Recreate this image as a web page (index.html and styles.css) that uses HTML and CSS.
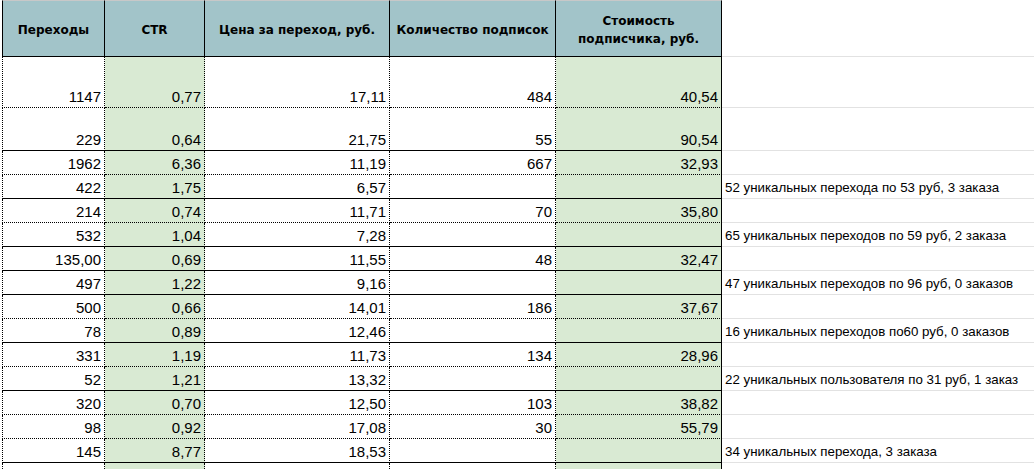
FILE: index.html
```html
<!DOCTYPE html>
<html lang="ru">
<head>
<meta charset="utf-8">
<title>Переходы</title>
<link rel="stylesheet" href="styles.css">
</head>
<body>
<div class="sheet">
  <div class="row head">
    <div class="c c1">Переходы</div>
    <div class="c c2">CTR</div>
    <div class="c c3">Цена за переход, руб.</div>
    <div class="c c4">Количество подписок</div>
    <div class="c c5">Стоимость<br>подписчика, руб.</div>
    <div class="c c6"></div>
  </div>
  <div class="row r51 dash">
    <div class="c c1">1147</div><div class="c c2">0,77</div><div class="c c3">17,11</div><div class="c c4">484</div><div class="c c5">40,54</div><div class="c c6"></div>
  </div>
  <div class="row r43 solid">
    <div class="c c1">229</div><div class="c c2">0,64</div><div class="c c3">21,75</div><div class="c c4">55</div><div class="c c5">90,54</div><div class="c c6"></div>
  </div>
  <div class="row dash">
    <div class="c c1">1962</div><div class="c c2">6,36</div><div class="c c3">11,19</div><div class="c c4">667</div><div class="c c5">32,93</div><div class="c c6"></div>
  </div>
  <div class="row solid">
    <div class="c c1">422</div><div class="c c2">1,75</div><div class="c c3">6,57</div><div class="c c4"></div><div class="c c5"></div><div class="c c6">52 уникальных перехода по 53 руб, 3 заказа</div>
  </div>
  <div class="row dash">
    <div class="c c1">214</div><div class="c c2">0,74</div><div class="c c3">11,71</div><div class="c c4">70</div><div class="c c5">35,80</div><div class="c c6"></div>
  </div>
  <div class="row solid">
    <div class="c c1">532</div><div class="c c2">1,04</div><div class="c c3">7,28</div><div class="c c4"></div><div class="c c5"></div><div class="c c6">65 уникальных переходов по 59 руб, 2 заказа</div>
  </div>
  <div class="row solid">
    <div class="c c1">135,00</div><div class="c c2">0,69</div><div class="c c3">11,55</div><div class="c c4">48</div><div class="c c5">32,47</div><div class="c c6"></div>
  </div>
  <div class="row solid">
    <div class="c c1">497</div><div class="c c2">1,22</div><div class="c c3">9,16</div><div class="c c4"></div><div class="c c5"></div><div class="c c6">47 уникальных переходов по 96 руб, 0 заказов</div>
  </div>
  <div class="row dash">
    <div class="c c1">500</div><div class="c c2">0,66</div><div class="c c3">14,01</div><div class="c c4">186</div><div class="c c5">37,67</div><div class="c c6"></div>
  </div>
  <div class="row solid">
    <div class="c c1">78</div><div class="c c2">0,89</div><div class="c c3">12,46</div><div class="c c4"></div><div class="c c5"></div><div class="c c6">16 уникальных переходов по60 руб, 0 заказов</div>
  </div>
  <div class="row dash">
    <div class="c c1">331</div><div class="c c2">1,19</div><div class="c c3">11,73</div><div class="c c4">134</div><div class="c c5">28,96</div><div class="c c6"></div>
  </div>
  <div class="row solid">
    <div class="c c1">52</div><div class="c c2">1,21</div><div class="c c3">13,32</div><div class="c c4"></div><div class="c c5"></div><div class="c c6">22 уникальных пользователя по 31 руб, 1 заказ</div>
  </div>
  <div class="row dash">
    <div class="c c1">320</div><div class="c c2">0,70</div><div class="c c3">12,50</div><div class="c c4">103</div><div class="c c5">38,82</div><div class="c c6"></div>
  </div>
  <div class="row dash">
    <div class="c c1">98</div><div class="c c2">0,92</div><div class="c c3">17,08</div><div class="c c4">30</div><div class="c c5">55,79</div><div class="c c6"></div>
  </div>
  <div class="row solid">
    <div class="c c1">145</div><div class="c c2">8,77</div><div class="c c3">18,53</div><div class="c c4"></div><div class="c c5"></div><div class="c c6">34 уникальных перехода, 3 заказа</div>
  </div>
  <div class="row dash">
    <div class="c c1">157</div><div class="c c2">0,86</div><div class="c c3">9,06</div><div class="c c4">176</div><div class="c c5">30,40</div><div class="c c6"></div>
  </div>
</div>
</body>
</html>
```

FILE: styles.css
```css
html, body {
  margin: 0;
  padding: 0;
  background: #ffffff;
  overflow: hidden;
}

.sheet {
  margin-left: 2px;
  font-family: "Liberation Sans", Arial, sans-serif;
  font-size: 15px;
  color: #000;
}

.row {
  display: grid;
  grid-template-columns: 103px 100px 185px 166px 166px 1fr;
  height: 24px;
}

.row.r51 { height: 51px; }
.row.r43 { height: 43px; }

.c {
  box-sizing: border-box;
  border-right: 1px dotted #000;
  border-bottom: 1px solid #000;
  display: flex;
  align-items: flex-end;
  justify-content: flex-end;
  padding: 0 3px 2px 0;
  line-height: 17px;
  white-space: nowrap;
}

.dash .c { border-bottom-style: dotted; }

.c1 { border-left: 1px dotted #000; }
.c2, .c5 { background: #d9ead3; }
.c5 { border-right-style: solid; }

.c6 {
  border-right: none;
  border-bottom: 1px solid #e2e2e2 !important;
  justify-content: flex-start;
  padding: 0 0 3px 3px;
  font-size: 13.3px;
  line-height: 15px;
}

.head {
  height: 57px;
}

.head .c {
  border-top: 1px solid #c8c8c8;
  border-right: 1px solid #000;
  border-bottom: 1px solid #000;
  background: #a2c4c9;
  font-family: "DejaVu Sans", Verdana, sans-serif;
  font-weight: bold;
  font-size: 12px;
  line-height: 18px;
  text-align: center;
  justify-content: center;
  align-items: center;
  padding: 2px 2px 0 2px;
}

.head .c1 { border-left: 1px solid #000; }

.head .c6 {
  background: #fff;
  border-top: none;
  border-right: none;
}
```
